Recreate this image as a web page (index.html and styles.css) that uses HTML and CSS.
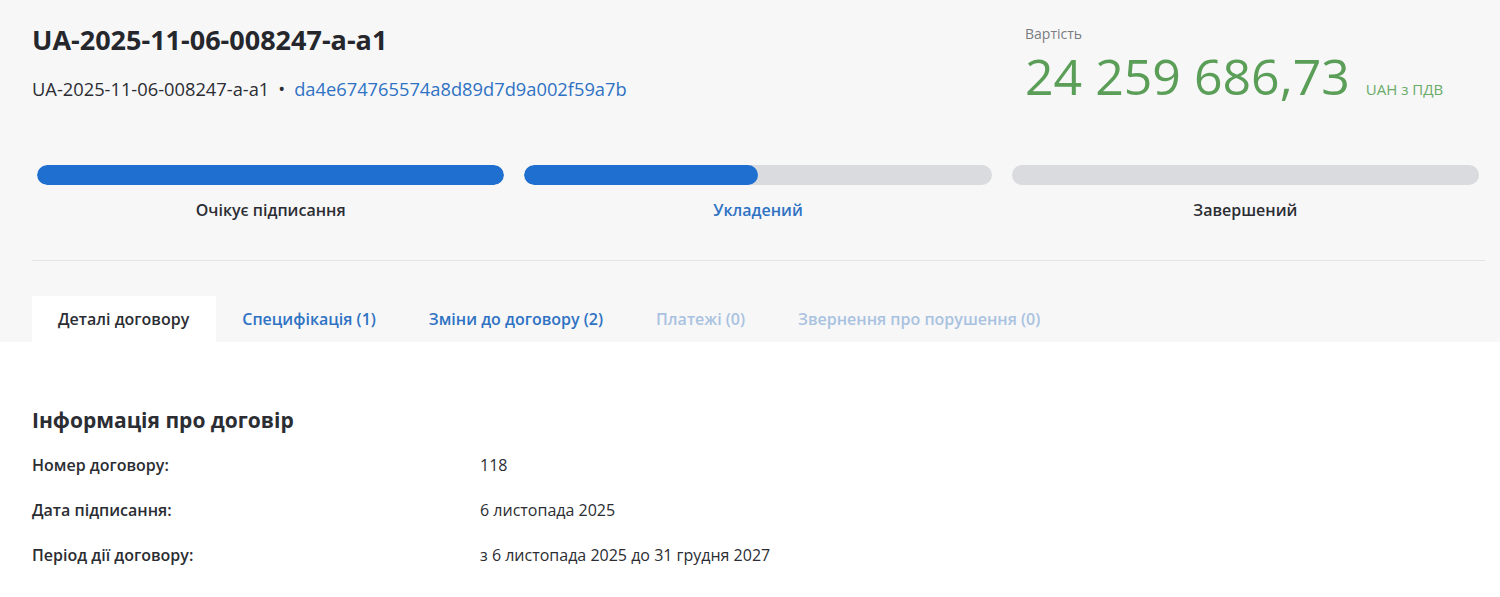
FILE: index.html
```html
<!DOCTYPE html>
<html lang="uk">
<head>
<meta charset="utf-8">
<title>UA-2025-11-06-008247-a-a1</title>
<link rel="stylesheet" href="styles.css">
</head>
<body>
<div class="top">
  <header class="head">
    <div class="ident">
      <h1 class="title">UA-2025-11-06-008247-a-a1</h1>
      <div class="sub">
        <span>UA-2025-11-06-008247-a-a1</span>
        <span class="dot">•</span>
        <a class="hash" href="#">da4e674765574a8d89d7d9a002f59a7b</a>
      </div>
    </div>
    <div class="price">
      <div class="price-label">Вартість</div>
      <div class="price-row">
        <span class="amount">24 259 686,73</span>
        <span class="currency">UAH з ПДВ</span>
      </div>
    </div>
  </header>

  <div class="steps">
    <div class="step">
      <div class="bar"><div class="fill" style="width:100%"></div></div>
      <div class="step-name">Очікує підписання</div>
    </div>
    <div class="step">
      <div class="bar"><div class="fill" style="width:50%"></div></div>
      <div class="step-name current">Укладений</div>
    </div>
    <div class="step">
      <div class="bar"><div class="fill" style="width:0%"></div></div>
      <div class="step-name">Завершений</div>
    </div>
  </div>

  <nav class="tabs">
    <a class="tab active" href="#">Деталі договору</a>
    <a class="tab" href="#">Специфікація (1)</a>
    <a class="tab" href="#">Зміни до договору (2)</a>
    <span class="tab disabled">Платежі (0)</span>
    <span class="tab disabled">Звернення про порушення (0)</span>
  </nav>
</div>

<main class="content">
  <h2 class="section-title">Інформація про договір</h2>
  <dl class="info">
    <div class="info-row"><dt>Номер договору:</dt><dd>118</dd></div>
    <div class="info-row"><dt>Дата підписання:</dt><dd>6 листопада 2025</dd></div>
    <div class="info-row"><dt>Період дії договору:</dt><dd>з 6 листопада 2025 до 31 грудня 2027</dd></div>
  </dl>
</main>
</body>
</html>
```

FILE: styles.css
```css
* { box-sizing: border-box; }

html, body {
  margin: 0;
  padding: 0;
  background: #ffffff;
  font-family: "Open Sans", "Noto Sans", sans-serif;
  color: #2b2d33;
}

a { text-decoration: none; }

.top {
  background: #f7f7f8;
  padding: 0 15px 0 32px;
}

.head {
  display: flex;
  justify-content: space-between;
  padding-top: 22px;
  height: 165px;
}

.title {
  margin: 0;
  font-size: 27px;
  font-weight: 700;
  line-height: 36px;
  color: #25272d;
}

.sub {
  margin-top: 18px;
  display: flex;
  align-items: center;
  gap: 9px;
  font-size: 18.3px;
  line-height: 26px;
  color: #2b2d33;
}

.hash { color: #2f72c3; }

.price {
  width: 460px;
  padding-top: 2px;
}

.price-label {
  font-size: 14px;
  line-height: 19px;
  color: #7a7c80;
}

.price-row {
  display: flex;
  align-items: baseline;
  gap: 16px;
  margin-top: 8px;
}

.amount {
  font-size: 50px;
  line-height: 50px;
  color: #5a9e58;
}

.currency {
  font-size: 15px;
  color: #6aab68;
}

.steps {
  display: grid;
  grid-template-columns: repeat(3, 1fr);
  gap: 20px;
  padding: 0 6px 0 5px;
}

.bar {
  height: 20px;
  border-radius: 10px;
  background: #d9dbdf;
  overflow: hidden;
}

.fill {
  height: 100%;
  background: #1f6fd1;
  border-radius: 10px;
}

.step-name {
  text-align: center;
  margin-top: 13px;
  font-size: 16px;
  line-height: 24px;
  font-weight: 600;
  color: #2b2d33;
}

.step-name.current { color: #2f72c3; }

.tabs {
  display: flex;
  margin-top: 38px;
  border-top: 1px solid #e3e4e6;
  padding-top: 35px;
}

.tab {
  padding: 12px 27px 12px 26px;
  font-size: 16px;
  font-weight: 600;
  color: #2f72c3;
  line-height: 22px;
}

.tab.active {
  background: #ffffff;
  color: #2b2d33;
}

.tab.disabled { color: #a9c2e0; }

.content {
  padding: 64px 32px 20px;
}

.section-title {
  margin: 0 0 20px;
  font-size: 21px;
  font-weight: 700;
  color: #2b2d33;
}

.info { margin: 0; }

.info-row {
  display: flex;
  height: 45px;
  font-size: 16px;
}

.info-row dt {
  width: 448px;
  font-weight: 600;
  color: #2b2d33;
}

.info-row dd {
  margin: 0;
  color: #2b2d33;
}
```
